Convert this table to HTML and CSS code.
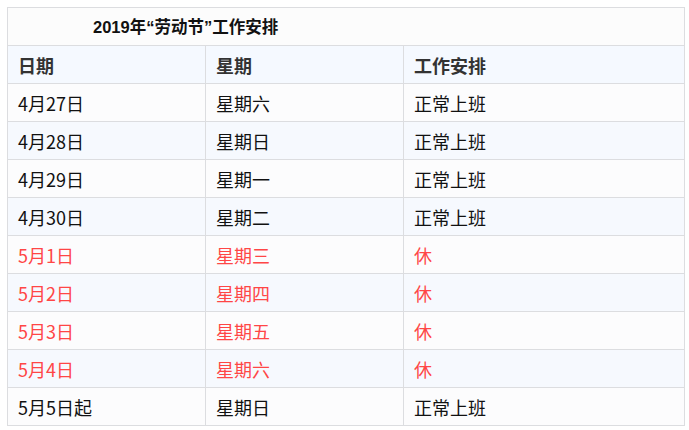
FILE: index.html
```html
<!DOCTYPE html>
<html lang="zh-CN">
<head>
<meta charset="utf-8">
<link rel="stylesheet" href="styles.css">
</head>
<body>
<table class="schedule">
  <colgroup>
    <col class="c1"><col class="c2"><col class="c3">
  </colgroup>
  <thead>
    <tr class="title-row"><th colspan="3" class="title">2019年“劳动节”工作安排</th></tr>
    <tr class="head-row"><th>日期</th><th>星期</th><th>工作安排</th></tr>
  </thead>
  <tbody>
    <tr><td>4月27日</td><td>星期六</td><td>正常上班</td></tr>
    <tr><td>4月28日</td><td>星期日</td><td>正常上班</td></tr>
    <tr><td>4月29日</td><td>星期一</td><td>正常上班</td></tr>
    <tr><td>4月30日</td><td>星期二</td><td>正常上班</td></tr>
    <tr class="off"><td>5月1日</td><td>星期三</td><td>休</td></tr>
    <tr class="off"><td>5月2日</td><td>星期四</td><td>休</td></tr>
    <tr class="off"><td>5月3日</td><td>星期五</td><td>休</td></tr>
    <tr class="off"><td>5月4日</td><td>星期六</td><td>休</td></tr>
    <tr><td>5月5日起</td><td>星期日</td><td>正常上班</td></tr>
  </tbody>
</table>
</body>
</html>
```
FILE: styles.css
```css
html, body {
  margin: 0;
  padding: 0;
  background: #ffffff;
}
body {
  padding: 7px 0 0 7px;
  font-family: "Noto Sans CJK SC", "Noto Sans", sans-serif;
  font-size: 18px;
  color: #111;
}
.schedule {
  border-collapse: collapse;
  table-layout: fixed;
  width: 677px;
}
.c1 { width: 198px; }
.c2 { width: 198px; }
.c3 { width: 281px; }
.schedule th,
.schedule td {
  border: 1px solid #dcdde0;
  height: 38px;
  padding: 0 0 0 10px;
  text-align: left;
  vertical-align: middle;
  line-height: 22px;
  box-sizing: border-box;
}
.title-row th {
  background: #fcfcfc;
  font-family: "Liberation Sans", "Noto Sans CJK SC", sans-serif;
  font-size: 16.5px;
  font-weight: bold;
  padding-left: 85px;
  color: #111;
}
.head-row th {
  background: #f5f9ff;
  font-weight: bold;
  color: #333;
}
.schedule tbody tr:nth-child(odd) td { background: #fcfcfd; }
.schedule tbody tr:nth-child(even) td { background: #f6f9fe; }
.schedule tbody tr.off td { color: #ff4646; }
```
